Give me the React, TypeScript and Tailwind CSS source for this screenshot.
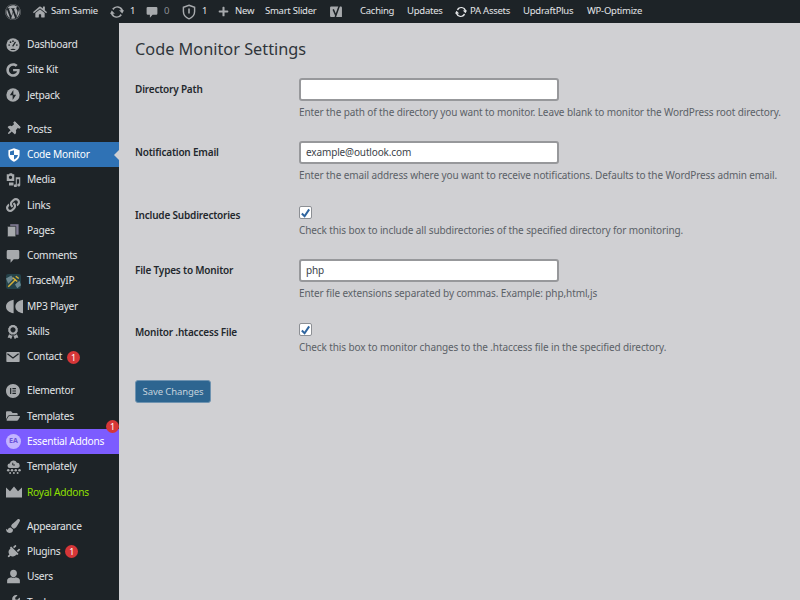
import React from "react";
import {
  FaWordpress, FaHome, FaPlus, FaGoogle, FaThumbtack, FaLink,
  FaAward, FaFolderOpen, FaPaintBrush, FaPlug, FaWrench,
} from "react-icons/fa";
import { SiElementor } from "react-icons/si";

const G = "#a7aaad";

const Shield = ({ filled = false }: { filled?: boolean }) => (
  <svg viewBox="0 0 20 20" className="w-[16px] h-[16px]">
    <path d="M10 1.500 17 4v5.500c0 4.500-3 7.500-7 9-4-1.500-7-4.500-7-9V4z" fill={filled ? "#fff" : "none"} stroke={filled ? "none" : G} strokeWidth="1.800" />
    {filled ? <path d="M10 4V10H5V5.500zM10 10H15C14.500 12.500 12.500 14.500 10 15.500z" fill="#2f72b5" /> : <path d="M10 5.500v6.500" stroke={G} strokeWidth="2" />}
  </svg>
);

const Update = ({ color = G, size = "w-[14px] h-[14px]" }: { color?: string; size?: string }) => (
  <svg viewBox="0 0 20 20" className={size} fill={color}>
    <path d="M10 3.500a6.500 6.500 0 0 1 6 4h-3l4.500 4.500L20 7.500h-1.200A9 9 0 0 0 3 5.500l2 1.800a6.500 6.500 0 0 1 5-3.800z" />
    <path d="M10 16.500a6.500 6.500 0 0 1-6-4h3L2.500 8 0 12.500h1.200a9 9 0 0 0 15.800 2l-2-1.800a6.500 6.500 0 0 1-5 3.800z" />
  </svg>
);

const Bubble = ({ size = "w-[14px] h-[14px]" }: { size?: string }) => (
  <svg viewBox="0 0 20 20" className={size} fill={G}>
    <path d="M3 1.500h14a2 2 0 0 1 2 2v9a2 2 0 0 1-2 2h-6l-4.500 5v-5H3a2 2 0 0 1-2-2v-9a2 2 0 0 1 2-2z" />
  </svg>
);

const Yoast = () => (
  <svg viewBox="0 0 20 20" className="w-[14px] h-[15px]">
    <path d="M3 3h14a1.500 1.500 0 0 1 1.500 1.500V18H3a1.500 1.500 0 0 1-1.500-1.500v-12A1.500 1.500 0 0 1 3 3z" fill={G} />
    <path d="M6 7l3.500 8M15 1 9 18" stroke="#1d2327" strokeWidth="2.200" fill="none" />
  </svg>
);

const Gauge = () => (
  <svg viewBox="0 0 20 20" className="w-[14px] h-[14px]">
    <circle cx="10" cy="10" r="9.500" fill={G} />
    <circle cx="4.500" cy="10" r="1.200" fill="#1d2327" /><circle cx="6.500" cy="6" r="1.200" fill="#1d2327" /><circle cx="10" cy="4.500" r="1.200" fill="#1d2327" /><circle cx="15.500" cy="10" r="1.200" fill="#1d2327" />
    <path d="M13.500 5.500 9.500 12" stroke="#1d2327" strokeWidth="1.800" />
    <path d="M6 17a5 4 0 0 1 8 0z" fill="#1d2327" />
  </svg>
);

const Pages = () => (
  <svg viewBox="0 0 20 20" className="w-[14px] h-[15px]">
    <path d="M6 1h12v15H6z" fill="#7f7a92" />
    <path d="M2 4h12v15H2z" fill={G} stroke="#1d2327" strokeWidth="1" />
  </svg>
);

const Mail = () => (
  <svg viewBox="0 0 20 20" className="w-[14px] h-[14px]">
    <rect x="0.500" y="3" width="19" height="14" rx="1" fill={G} />
    <path d="M2 5.500 10 11.500 18 5.500" fill="none" stroke="#1d2327" strokeWidth="1.800" />
  </svg>
);

const User = () => (
  <svg viewBox="0 0 20 20" className="w-[15px] h-[15px]" fill={G}>
    <path d="M10 1a4.500 4.500 0 0 1 4.500 5c0 2.500-2 5-4.500 5S5.500 8.500 5.500 6A4.500 4.500 0 0 1 10 1z" />
    <path d="M7 11c1 1 5 1 6 0 3 .5 5.500 2 5.500 4v4h-17v-4c0-2 2.500-3.500 5.500-4z" />
  </svg>
);

const Media = () => (
  <svg viewBox="0 0 20 20" className="w-[15px] h-[15px]" fill={G}>
    <path d="M1 3h3l1-1.500h3L9 3h2v9H1zM6 5a2.200 2.200 0 1 0 .01 0z" fillRule="evenodd" />
    <path d="M13 7h6v10.500a2 2 0 1 1-1.500-2V9.500h-3v9a2 2 0 1 1-1.500-2z" />
    <path d="M4 14h6v4H4z" />
  </svg>
);

const Jetpack = () => (
  <svg viewBox="0 0 20 20" className="w-[14px] h-[14px]">
    <circle cx="10" cy="10" r="9.500" fill={G} />
    <path d="M10.500 3v7.500h-5zM9.500 17V9.500h5z" fill="#1d2327" />
  </svg>
);

const Mp3 = () => (
  <svg viewBox="0 0 20 20" className="w-[17px] h-[17px]" fill={G}>
    <path d="M9 2v16C3 17 0 14 0 10s3-7 9-8z" />
    <path d="M20 2v16c-6-1-9-4-9-8s3-7 9-8z" />
  </svg>
);

const Trace = () => (
  <svg viewBox="0 0 20 20" className="w-[15px] h-[15px]">
    <rect width="20" height="20" rx="3" fill="#24424a" />
    <path d="M0 6 7 2l3 4L3 13zM12 14l6-5 2 6-5 4z" fill="#6d8890" />
    <path d="M3 17 13 7M9 5l6 5M13 3l4 3" stroke="#d5b13a" strokeWidth="2" fill="none" />
  </svg>
);

const EA = () => (
  <span className="w-[15px] h-[15px] rounded-full bg-[#c3b4ff] text-[#6d54d8] text-[7px] font-bold flex items-center justify-center">EA</span>
);

const Templately = () => (
  <svg viewBox="0 0 20 20" className="w-[15px] h-[15px]" fill={G}>
    <path d="M5 12a3 3 0 0 1 0-6 5 5 0 0 1 9.500-1A3.500 3.500 0 0 1 15 12z" />
    <path d="M9 5v3h3" stroke="#1d2327" strokeWidth="1.200" fill="none" />
    <circle cx="3" cy="15" r="1.700" /><circle cx="8" cy="15" r="1.700" /><circle cx="13" cy="15" r="1.700" /><circle cx="18" cy="15" r="1.700" />
    <circle cx="5.500" cy="18.700" r="1.300" /><circle cx="10.500" cy="18.700" r="1.300" /><circle cx="15.500" cy="18.700" r="1.300" />
  </svg>
);

const Crown = () => (
  <svg viewBox="0 0 20 20" className="w-[16px] h-[16px]" fill={G}>
    <path d="M0 4.500 5 9l5-6 5 6 5-4.500V17H0z" />
  </svg>
);

type Item = { label: string; icon: React.ReactNode; badge?: boolean; active?: boolean; purple?: boolean; lime?: boolean; sep?: boolean };
const ic = "text-[#a7aaad] w-[14px] h-[14px]";
const items: Item[] = [
  { label: "Dashboard", icon: <Gauge /> },
  { label: "Site Kit", icon: <FaGoogle className={ic} /> },
  { label: "Jetpack", icon: <Jetpack /> },
  { label: "Posts", icon: <FaThumbtack className={`${ic} rotate-45`} />, sep: true },
  { label: "Code Monitor", icon: <Shield filled />, active: true },
  { label: "Media", icon: <Media /> },
  { label: "Links", icon: <FaLink className={ic} /> },
  { label: "Pages", icon: <Pages /> },
  { label: "Comments", icon: <Bubble /> },
  { label: "TraceMyIP", icon: <Trace /> },
  { label: "MP3 Player", icon: <Mp3 /> },
  { label: "Skills", icon: <FaAward className={ic} /> },
  { label: "Contact", icon: <Mail />, badge: true },
  { label: "Elementor", icon: <SiElementor className={ic} />, sep: true },
  { label: "Templates", icon: <FaFolderOpen className={ic} /> },
  { label: "Essential Addons", icon: <EA />, purple: true },
  { label: "Templately", icon: <Templately /> },
  { label: "Royal Addons", icon: <Crown />, lime: true },
  { label: "Appearance", icon: <FaPaintBrush className={ic} />, sep: true },
  { label: "Plugins", icon: <FaPlug className={`${ic} rotate-45`} />, badge: true },
  { label: "Users", icon: <User /> },
  { label: "Tools", icon: <FaWrench className={ic} /> },
];

const Badge = ({ className = "" }: { className?: string }) => (
  <span className={`w-[13px] h-[13px] rounded-full bg-[#d63638] text-white text-[9px] leading-[13px] text-center ${className}`}>1</span>
);

const Row = ({ item }: { item: Item }) => {
  const bg = item.active ? "bg-[#2f72b5]" : item.purple ? "bg-[#7c5cff]" : "";
  const color = item.lime ? "text-[#8fe000]" : item.active || item.purple ? "text-white" : "text-[#e3e5e7]";
  return (
    <div className={`relative h-[25.3px] shrink-0 flex items-center ${bg} ${item.sep ? "mt-[8.800px]" : ""}`}>
      <span className="w-[27px] pl-[6px] flex justify-start items-center shrink-0">{item.icon}</span>
      <span className={`text-[10.200px] tracking-[-0.25px] whitespace-nowrap ${color}`}>{item.label}</span>
      {item.badge && <Badge className="ml-[5px]" />}
      {item.purple && <Badge className="absolute right-[0px] top-[-9px]" />}
      {item.active && <span className="absolute right-0 top-[8px] w-0 h-0 border-y-[5px] border-y-transparent border-r-[5px] border-r-[#d0d0d3]" />}
    </div>
  );
};

const TopItem = ({ children, className = "" }: { children: React.ReactNode; className?: string }) => (
  <span className={`flex items-center whitespace-nowrap ${className}`}>{children}</span>
);

const TopBar = () => (
  <header className="h-[23px] shrink-0 bg-[#1d2327] flex items-center text-[9.500px] tracking-[-0.25px] text-[#e3e5e7] pl-[5px]">
    <TopItem className="w-[28px]"><FaWordpress className="w-[16px] h-[16px] text-[#a7aaad]" /></TopItem>
    <TopItem className="w-[77px]"><FaHome className="w-[14px] h-[14px] text-[#a7aaad] mr-[4px]" />Sam Samie</TopItem>
    <TopItem className="w-[36px]"><Update /><span className="ml-[6px]">1</span></TopItem>
    <TopItem className="w-[35px]"><Bubble size="w-[12px] h-[12px]" /><span className="ml-[6px] text-[#8c8f94]">0</span></TopItem>
    <TopItem className="w-[37px]"><Shield /><span className="ml-[5px]">1</span></TopItem>
    <TopItem className="w-[47px]"><FaPlus className="w-[11px] h-[11px] text-[#a7aaad] mr-[6px]" />New</TopItem>
    <TopItem className="w-[64px]">Smart Slider</TopItem>
    <TopItem className="w-[31px]"><Yoast /></TopItem>
    <TopItem className="w-[47px]">Caching</TopItem>
    <TopItem className="w-[48px]">Updates</TopItem>
    <TopItem className="w-[68px]"><Update color="#e3e5e7" size="w-[12px] h-[12px]" /><span className="ml-[3px]">PA Assets</span></TopItem>
    <TopItem className="w-[64px]">UpdraftPlus</TopItem>
    <TopItem>WP-Optimize</TopItem>
  </header>
);

const Setting = ({ label, desc, h, children }: { label: string; desc: string; h: string; children: React.ReactNode }) => (
  <div className={`flex ${h}`}>
    <div className="w-[164px] shrink-0 text-[#23282d] font-semibold text-[10px] tracking-[-0.19px] leading-[23.500px]">{label}</div>
    <div>
      {children}
      <p className="text-[10px] tracking-[-0.105px] leading-[15px] text-[#5b6167] whitespace-nowrap">{desc}</p>
    </div>
  </div>
);

const Text = ({ value = "" }: { value?: string }) => (
  <div className="w-[260px] h-[23px] rounded-[3px] bg-white border-2 border-[#97989b] px-[5px] text-[10px] tracking-[-0.14px] leading-[19px] text-[#3c434a] mb-[4px]">{value}</div>
);

const Check = () => (
  <div className="w-[13px] h-[13px] mt-[2px] mb-[4px] rounded-[2px] bg-white border border-[#8c8f94] flex items-center justify-center">
    <svg viewBox="0 0 12 12" className="w-[12px] h-[12px]"><path d="M2 6.500 5 9.500l5-7.500" fill="none" stroke="#2f659f" strokeWidth="2.200" /></svg>
  </div>
);

export default function App() {
  return (
    <div className="w-[800px] h-[600px] overflow-hidden flex flex-col bg-[#d0d0d3]" style={{ fontFamily: '"Noto Sans", sans-serif' }}>
      <TopBar />
      <div className="flex flex-1 min-h-0">
        <aside className="w-[119px] shrink-0 bg-[#1d2327] flex flex-col pt-[9px] overflow-hidden">
          {items.map((i) => <Row key={i.label} item={i} />)}
        </aside>
        <main className="flex-1 pl-[16px] pt-[16px]">
          <h1 className="text-[16.300px] leading-[20px] text-[#2f353a] mb-[19px]">Code Monitor Settings</h1>
          <Setting label="Directory Path" desc="Enter the path of the directory you want to monitor. Leave blank to monitor the WordPress root directory." h="h-[63px]"><Text /></Setting>
          <Setting label="Notification Email" desc="Enter the email address where you want to receive notifications. Defaults to the WordPress admin email." h="h-[63px]"><Text value="example@outlook.com" /></Setting>
          <Setting label="Include Subdirectories" desc="Check this box to include all subdirectories of the specified directory for monitoring." h="h-[55px]"><Check /></Setting>
          <Setting label="File Types to Monitor" desc="Enter file extensions separated by commas. Example: php,html,js" h="h-[62px]"><Text value="php" /></Setting>
          <Setting label="Monitor .htaccess File" desc="Check this box to monitor changes to the .htaccess file in the specified directory." h="h-[59px]"><Check /></Setting>
          <button className="block h-[23px] w-[76px] pt-[2px] rounded-[3px] bg-[#2d6590] border border-[#6f93b0] text-[#c5d3dd] text-[9.500px] tracking-[-0.1px]">Save Changes</button>
        </main>
      </div>
    </div>
  );
}
